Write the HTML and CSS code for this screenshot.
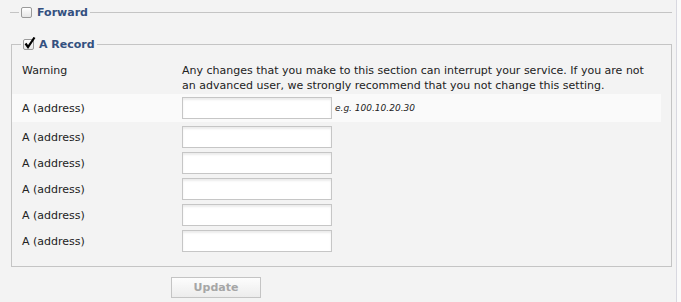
FILE: index.html
```html
<!DOCTYPE html>
<html lang="en">
<head>
    <meta charset="UTF-8">
    <title>DNS Records</title>
    <link rel="stylesheet" href="styles.css">
</head>
<body>
    <div class="page">
        <fieldset class="group group-collapsed">
            <legend><span class="check"></span>Forward</legend>
        </fieldset>

        <fieldset class="group">
            <legend>
                <span class="check">
                    <svg width="13" height="13" viewBox="0 0 13 13"><path d="M2.5 6.5 L5 10 L11.5 0.5" fill="none" stroke="#000" stroke-width="2.2"/></svg>
                </span>A Record
            </legend>

            <div class="row row-warning">
                <div class="label">Warning</div>
                <div class="field">Any changes that you make to this section can interrupt your service. If you are not an advanced user, we strongly recommend that you not change this setting.</div>
            </div>
            <div class="row row-alt">
                <div class="label">A (address)</div>
                <div class="field"><input type="text"><span class="hint">e.g. 100.10.20.30</span></div>
            </div>
            <div class="row">
                <div class="label">A (address)</div>
                <div class="field"><input type="text"></div>
            </div>
            <div class="row">
                <div class="label">A (address)</div>
                <div class="field"><input type="text"></div>
            </div>
            <div class="row">
                <div class="label">A (address)</div>
                <div class="field"><input type="text"></div>
            </div>
            <div class="row">
                <div class="label">A (address)</div>
                <div class="field"><input type="text"></div>
            </div>
            <div class="row">
                <div class="label">A (address)</div>
                <div class="field"><input type="text"></div>
            </div>
        </fieldset>

        <div class="actions">
            <button class="btn-update" disabled>Update</button>
        </div>
    </div>
</body>
</html>
```

FILE: styles.css
```css
* {
    margin: 0;
    padding: 0;
    box-sizing: border-box;
}

body {
    min-height: 100vh;
    overflow: hidden;
    background-color: #fafafa;
    font-family: 'DejaVu Sans', Verdana, sans-serif;
    font-size: 11px;
    color: #222;
}

.page {
    width: 677px;
    min-height: 302px;
    padding: 5px 4px 0 10px;
    background-color: #f3f3f3;
    border-right: 1px solid #d8d8e0;
}

.group {
    border: 1px solid #c4c4c4;
    margin: 0;
    padding: 0 10px 12px 0;
}

.group-collapsed {
    border-width: 1px 0 0 0;
    padding: 0;
    margin-bottom: 18px;
}

.group + .group {
    margin-left: 1px;
}

.group legend {
    display: flex;
    align-items: center;
    height: 14px;
    margin-left: 9px;
    padding: 0 2px 0 2px;
    font-weight: bold;
    font-size: 11px;
    color: #34507f;
}

.check {
    position: relative;
    width: 11px;
    height: 11px;
    margin-right: 5px;
    border: 1px solid #9a9a9a;
    border-radius: 2px;
    background: linear-gradient(#fff, #e6e6e6);
}

.check svg {
    position: absolute;
    left: -1px;
    top: -3px;
}

.row {
    display: grid;
    grid-template-columns: 170px 1fr;
    align-items: center;
    padding: 2px 0;
}

.row-warning {
    align-items: start;
    padding: 12px 0 1px;
    line-height: 15px;
}

.row-alt {
    background-color: #fafafa;
    padding: 3px 0;
    margin-bottom: 2px;
}

.label {
    padding-left: 10px;
}

.field {
    display: flex;
    align-items: center;
}

.field input {
    width: 150px;
    height: 22px;
    border: 1px solid #c6c6c6;
    background-color: #fff;
    box-shadow: inset 0 2px 2px #ececec;
    outline: none;
}

.hint {
    margin-left: 3px;
    font-style: italic;
    font-size: 9px;
}

.actions {
    padding: 10px 0 0 161px;
}

.btn-update {
    width: 90px;
    height: 21px;
    border: 1px solid #c4c4c4;
    background: linear-gradient(#fdfdfd, #ececec);
    font-family: 'DejaVu Sans', Verdana, sans-serif;
    font-size: 11px;
    font-weight: bold;
    color: #a6a6a6;
}
```
